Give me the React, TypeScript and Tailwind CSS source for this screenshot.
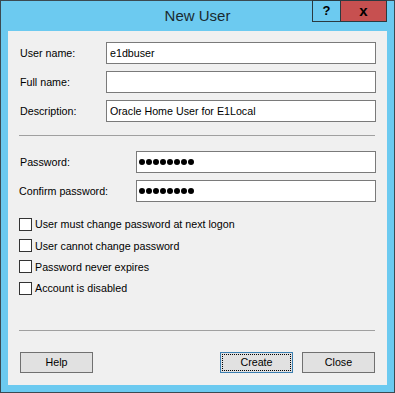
import React from 'react'

const font = { fontFamily: '"Liberation Sans", Arial, sans-serif' }

function TextBox({ value, width }: { value?: string; width: string }) {
  return (
    <div className={`${width} h-[22px] border border-[#7a7a7a] bg-white px-[3px] flex items-center text-[10.7px] text-black`}>
      {value}
    </div>
  )
}

function PasswordBox() {
  return (
    <div className="w-[241px] h-[22px] border border-[#7a7a7a] bg-white pl-[2px] flex items-center gap-[1px]">
      {Array.from({ length: 8 }).map((_, i) => (
        <span key={i} className="w-[6px] h-[6px] rounded-full bg-black" />
      ))}
    </div>
  )
}

function Field({ label, children, labelWidth }: { label: string; children: React.ReactNode; labelWidth: string }) {
  return (
    <div className="flex items-center">
      <span className={`${labelWidth} text-[10.7px] text-black`}>{label}</span>
      {children}
    </div>
  )
}

function Check({ label }: { label: string }) {
  return (
    <label className="flex items-center h-[13px] gap-[3px] text-[10.7px] text-black">
      <span className="w-[13px] h-[13px] border border-[#333333] bg-white shrink-0" />
      {label}
    </label>
  )
}

function Button({ label, focused }: { label: string; focused?: boolean }) {
  return (
    <button
      className={[
        'w-[73px] h-[21px] bg-[#e1e1e1] text-[10.7px] text-black flex items-center justify-center p-[1px]',
        focused ? 'border border-[#3c7fb1]' : 'border border-[#707070]',
      ].join(' ')}
    >
      <span
        className={[
          'w-full h-full flex items-center justify-center',
          focused ? 'border border-dotted border-black' : '',
        ].join(' ')}
      >
        {label}
      </span>
    </button>
  )
}

export default function App() {
  return (
    <div style={font} className="w-[395px] h-[393px] bg-[#6ccaf0] border border-[#3b4a52] flex flex-col">
      {/* title bar */}
      <div className="relative h-[30px] shrink-0 flex items-center justify-center">
        <span className="text-[15px] text-[#1a2a30] pt-[1px]">New User</span>
        <div className="absolute top-[-1px] right-[7px] flex">
          <div className="w-[29px] h-[22px] border border-[#2a3a40] flex items-center justify-center text-[13px] font-bold text-black">
            ?
          </div>
          <div className="w-[46px] h-[22px] border border-l-0 border-[#2a3a40] bg-[#c75050] flex items-center justify-center text-[15px] font-black text-black">
            x
          </div>
        </div>
      </div>

      {/* client area */}
      <div className="mx-[7px] h-[354px] bg-[#f0f0f0] px-[11px] pt-[11px] flex flex-col">
        <div className="flex flex-col gap-[7px]">
          <Field label="User name:" labelWidth="w-[87px] pl-[1px]">
            <TextBox value="e1dbuser" width="w-[270px]" />
          </Field>
          <Field label="Full name:" labelWidth="w-[87px] pl-[1px]">
            <TextBox width="w-[270px]" />
          </Field>
          <Field label="Description:" labelWidth="w-[87px] pl-[1px]">
            <TextBox value="Oracle Home User for E1Local" width="w-[270px]" />
          </Field>
        </div>

        <div className="mt-[13px] h-[1px] bg-[#a0a0a0] w-[356px]" />

        <div className="mt-[15px] flex flex-col gap-[7px]">
          <Field label="Password:" labelWidth="w-[117px] pl-[1px]">
            <PasswordBox />
          </Field>
          <Field label="Confirm password:" labelWidth="w-[117px]">
            <PasswordBox />
          </Field>
        </div>

        <div className="mt-[16px] flex flex-col gap-[8.2px]">
          <Check label="User must change password at next logon" />
          <Check label="User cannot change password" />
          <Check label="Password never expires" />
          <Check label="Account is disabled" />
        </div>

        <div className="mt-[35px] h-[1px] bg-[#a0a0a0] w-[356px]" />

        <div className="mt-[21px] flex items-center w-[356px] pl-[1px]">
          <Button label="Help" />
          <div className="flex-1" />
          <Button label="Create" focused />
          <div className="w-[9px]" />
          <Button label="Close" />
        </div>
      </div>
    </div>
  )
}
